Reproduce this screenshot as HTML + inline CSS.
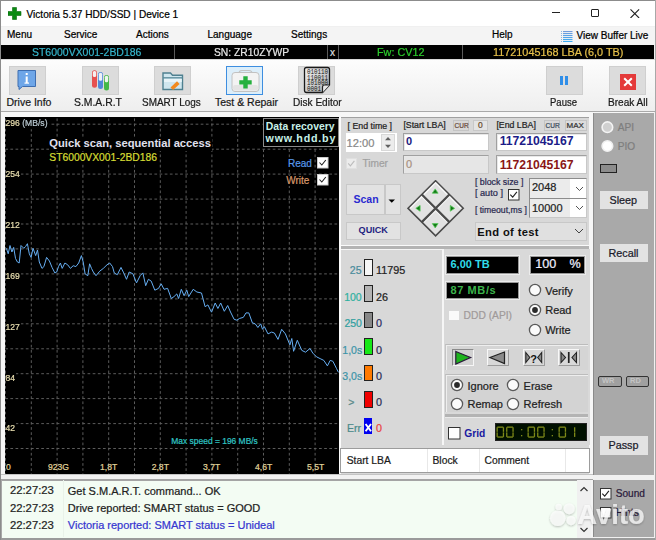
<!DOCTYPE html>
<html><head><meta charset="utf-8"><style>
html,body{margin:0;padding:0;}
body{width:656px;height:540px;overflow:hidden;position:relative;background:#f0f0f0;font-family:"Liberation Sans",sans-serif;}
body>div{position:absolute;}
.t{position:absolute;white-space:nowrap;line-height:1;font-family:"Liberation Sans",sans-serif;}
</style></head><body>
<div style="left:0px;top:0px;width:656px;height:540px;background:#f0f0f0"></div>
<div style="left:0px;top:0px;width:656px;height:26px;background:#ffffff"></div>
<div style="left:0px;top:0px;width:656px;height:1px;background:#8c8c8c"></div>
<svg style="position:absolute;left:8px;top:7px;" width="14" height="13" viewBox="0 0 14 13"><path d="M4.5 0.5h4v4h4.5v4h-4.5v4h-4v-4h-4.5v-4h4.5z" fill="#0b8a12" stroke="#0a6a0e" stroke-width="0.6"/></svg>
<span class="t" style="left:26.50px;top:10.01px;font-size:10.1px;color:#000;-webkit-text-stroke:0.22px currentColor;">Victoria 5.37 HDD/SSD | Device 1</span>
<div style="left:551.5px;top:12px;width:8.5px;height:1.3px;background:#222"></div>
<div style="left:590.7px;top:8.8px;width:8.6px;height:8.6px;border:1.2px solid #222;border-radius:1px;box-sizing:border-box"></div>
<svg style="position:absolute;left:630px;top:8.5px;" width="10" height="9.5" viewBox="0 0 10 9.5"><path d="M0.5 0.4L9.1 9M9.1 0.4L0.5 9" stroke="#222" stroke-width="1.1"/></svg>
<div style="left:0px;top:26.5px;width:656px;height:18.5px;background:#f4f4f4"></div>
<span class="t" style="left:7.00px;top:29.62px;font-size:10px;color:#000;-webkit-text-stroke:0.22px currentColor;">Menu</span>
<span class="t" style="left:64.00px;top:29.62px;font-size:10px;color:#000;-webkit-text-stroke:0.22px currentColor;">Service</span>
<span class="t" style="left:136.00px;top:29.62px;font-size:10px;color:#000;-webkit-text-stroke:0.22px currentColor;">Actions</span>
<span class="t" style="left:207.50px;top:29.93px;font-size:10px;color:#000;-webkit-text-stroke:0.22px currentColor;">Language</span>
<span class="t" style="left:291.00px;top:29.93px;font-size:10px;color:#000;-webkit-text-stroke:0.22px currentColor;">Settings</span>
<span class="t" style="left:492.00px;top:30.02px;font-size:10px;color:#000;-webkit-text-stroke:0.22px currentColor;">Help</span>
<svg style="position:absolute;left:561px;top:30px;" width="12" height="12" viewBox="0 0 12 12"><defs><linearGradient id="vb" gradientUnits="userSpaceOnUse" x1="0" y1="0" x2="0" y2="12"><stop offset="0" stop-color="#7a9ad8"/><stop offset="1" stop-color="#3aacf2"/></linearGradient></defs><rect x="2" y="1" width="9.5" height="1.1" fill="url(#vb)"/><rect x="0" y="1" width="1" height="1" fill="#8ab4e0"/><rect x="2" y="3" width="9.5" height="1.1" fill="url(#vb)"/><rect x="0" y="3" width="1" height="1" fill="#8ab4e0"/><rect x="2" y="5" width="9.5" height="1.1" fill="url(#vb)"/><rect x="0" y="5" width="1" height="1" fill="#8ab4e0"/><rect x="2" y="7" width="9.5" height="1.1" fill="url(#vb)"/><rect x="0" y="7" width="1" height="1" fill="#8ab4e0"/><rect x="2" y="9" width="9.5" height="1.1" fill="url(#vb)"/><rect x="0" y="9" width="1" height="1" fill="#8ab4e0"/><rect x="2" y="11" width="9.5" height="1.1" fill="url(#vb)"/><rect x="0" y="11" width="1" height="1" fill="#8ab4e0"/></svg>
<span class="t" style="left:576.50px;top:30.72px;font-size:10px;color:#000;-webkit-text-stroke:0.22px currentColor;">View Buffer Live</span>
<div style="left:1px;top:45px;width:653px;height:14px;background:#000"></div>
<div style="left:174px;top:45px;width:1px;height:14px;background:#5a5a5a"></div>
<div style="left:327px;top:45px;width:1px;height:14px;background:#5a5a5a"></div>
<div style="left:338px;top:45px;width:1px;height:14px;background:#5a5a5a"></div>
<div style="left:462px;top:45px;width:1px;height:14px;background:#5a5a5a"></div>
<span class="t" style="left:31.80px;top:47.15px;font-size:11.5px;color:#36b6cc;-webkit-text-stroke:0.22px currentColor;transform-origin:0 0;transform:scaleX(0.91);">ST6000VX001-2BD186</span>
<span class="t" style="left:213.60px;top:47.15px;font-size:11.5px;color:#e8e8e8;-webkit-text-stroke:0.22px currentColor;transform-origin:0 0;transform:scaleX(0.896);">SN: ZR10ZYWP</span>
<span class="t" style="left:330.00px;top:48.33px;font-size:10px;color:#dddddd;-webkit-text-stroke:0.22px currentColor;">x</span>
<span class="t" style="left:376.50px;top:47.15px;font-size:11.5px;color:#2ccc2c;-webkit-text-stroke:0.22px currentColor;transform-origin:0 0;transform:scaleX(0.94);">Fw: CV12</span>
<span class="t" style="left:493.20px;top:47.15px;font-size:11.5px;color:#e6c04a;-webkit-text-stroke:0.22px currentColor;transform-origin:0 0;transform:scaleX(0.943);">11721045168 LBA (6,0 TB)</span>
<div style="left:1px;top:59px;width:654px;height:53px;background:linear-gradient(#fdfdfd,#eeeeee)"></div>
<div style="left:1px;top:59px;width:654px;height:1px;background:#d8d8d8"></div>
<div style="left:1px;top:111px;width:654px;height:1px;background:#a9a9a9"></div>
<div style="left:1px;top:112px;width:654px;height:5px;background:#f7f7f7"></div>
<div style="left:9px;top:66px;width:37px;height:29px;background:#dcdcdc;border:1px solid #cfcfcf;box-sizing:border-box"></div>
<div style="left:82px;top:66px;width:37px;height:29px;background:#dcdcdc;border:1px solid #cfcfcf;box-sizing:border-box"></div>
<div style="left:154px;top:66px;width:37px;height:29px;background:#dcdcdc;border:1px solid #cfcfcf;box-sizing:border-box"></div>
<div style="left:226px;top:66px;width:37px;height:29px;background:#dceefa;border:1px solid #3d8ee0;box-sizing:border-box"></div>
<div style="left:298px;top:66px;width:37px;height:29px;background:#dcdcdc;border:1px solid #cfcfcf;box-sizing:border-box"></div>
<div style="left:546px;top:66px;width:37px;height:29px;background:#dcdcdc;border:1px solid #cfcfcf;box-sizing:border-box"></div>
<div style="left:609px;top:66px;width:37px;height:29px;background:#dcdcdc;border:1px solid #cfcfcf;box-sizing:border-box"></div>
<svg style="position:absolute;left:17px;top:70px;" width="20" height="20" viewBox="0 0 20 20"><path d="M1 0.5h17.5v16h-13l-3.5 3v-3h-1z" fill="#6ea6e8" stroke="#3f6eb0" stroke-width="1"/><rect x="8.7" y="3" width="2" height="2" fill="#fff"/><rect x="8.7" y="6.5" width="2" height="6.5" fill="#fff"/><rect x="7.5" y="12.5" width="4.5" height="1.2" fill="#fff"/></svg>
<svg style="position:absolute;left:91px;top:69px;" width="20" height="23" viewBox="0 0 20 23"><rect x="1" y="1.3" width="5" height="17.5" rx="2.5" fill="#e65050"/><rect x="7" y="3" width="5" height="17" rx="2.5" fill="#5088d8"/><rect x="13" y="6" width="5" height="15.5" rx="2.5" fill="#44b848"/><rect x="1.8" y="2" width="3.4" height="6" rx="1.5" fill="#f6f0f0"/><rect x="7.8" y="3.7" width="3.4" height="8" rx="1.5" fill="#eef2f8"/><rect x="13.8" y="6.7" width="3.4" height="6.5" rx="1.5" fill="#eef6ee"/></svg>
<svg style="position:absolute;left:160px;top:70px;" width="25" height="21" viewBox="0 0 25 21"><path d="M3 3h7.5l2 2.2h10v14.3h-19.5z" fill="#cfe6ee" stroke="#4f8090" stroke-width="1.4"/><path d="M3 7.8h19.5" stroke="#5a8c9a" stroke-width="1.3"/><rect x="4" y="9" width="17.8" height="3" fill="#e8f4f8"/><path d="M10.5 17.5l6.5-6.2l2.6 2.6l-6.5 6.2z" fill="#f28a1e"/></svg>
<svg style="position:absolute;left:230px;top:68px;" width="31" height="25" viewBox="0 0 31 25"><path d="M9 5.5q0-3 3-3h7q3 0 3 3" fill="none" stroke="#c4c4c4" stroke-width="1.2"/><rect x="2" y="4.5" width="27" height="19" rx="3" fill="#f3f3f3" stroke="#c2c2c2" stroke-width="1"/><rect x="3" y="17" width="25" height="5.5" rx="2" fill="#e4e4e4"/><path d="M13.3 8.2h4.4v4h4v4.4h-4v4h-4.4v-4h-4v-4.4h4z" fill="#26b03e"/></svg>
<svg style="position:absolute;left:303px;top:66px;" width="30" height="28" viewBox="0 0 30 28"><defs><linearGradient id="dg" x1="0" y1="0" x2="1" y2="1"><stop offset="0" stop-color="#f4f4f4"/><stop offset="1" stop-color="#a8a8a8"/></linearGradient></defs><path d="M3.5 1.5h21q2 0 2 2v15.5l-7 7.5h-16q-2 0-2-2v-21q0-2 2-2z" fill="url(#dg)" stroke="#1a1a1a" stroke-width="1.3"/><path d="M19.5 26.5v-5.5q0-2 2-2h5" fill="#e8e8e8" stroke="#222" stroke-width="1.2"/><g font-family="Liberation Mono" font-size="6.9" fill="#111"><text x="4" y="8" textLength="21" lengthAdjust="spacingAndGlyphs">010110</text><text x="4" y="13.5" textLength="21" lengthAdjust="spacingAndGlyphs">110011</text><text x="4" y="19" textLength="21" lengthAdjust="spacingAndGlyphs">101000</text><text x="4" y="24.5" textLength="14" lengthAdjust="spacingAndGlyphs">0001</text></g></svg>
<div style="left:560px;top:76px;width:3px;height:9px;background:#2f8ee8"></div>
<div style="left:565px;top:76px;width:3px;height:9px;background:#2f8ee8"></div>
<svg style="position:absolute;left:620px;top:73.5px;" width="16" height="16" viewBox="0 0 16 16"><rect x="0" y="0" width="16" height="16" fill="#e43a3a"/><path d="M4.2 4.2L11.8 11.8M11.8 4.2L4.2 11.8" stroke="#fff" stroke-width="2"/></svg>
<span class="t" style="left:6.50px;top:97.27px;font-size:10.5px;color:#1a1a1a;-webkit-text-stroke:0.22px currentColor;transform-origin:0 0;transform:scaleX(1);">Drive Info</span>
<span class="t" style="left:74.30px;top:97.27px;font-size:10.5px;color:#1a1a1a;-webkit-text-stroke:0.22px currentColor;transform-origin:0 0;transform:scaleX(0.99);">S.M.A.R.T</span>
<span class="t" style="left:141.50px;top:97.27px;font-size:10.5px;color:#1a1a1a;-webkit-text-stroke:0.22px currentColor;transform-origin:0 0;transform:scaleX(0.947);">SMART Logs</span>
<span class="t" style="left:215.00px;top:97.27px;font-size:10.5px;color:#1a1a1a;-webkit-text-stroke:0.22px currentColor;transform-origin:0 0;transform:scaleX(1);">Test &amp; Repair</span>
<span class="t" style="left:293.00px;top:97.27px;font-size:10.5px;color:#1a1a1a;-webkit-text-stroke:0.22px currentColor;transform-origin:0 0;transform:scaleX(0.96);">Disk Editor</span>
<span class="t" style="left:549.50px;top:97.27px;font-size:10.5px;color:#1a1a1a;-webkit-text-stroke:0.22px currentColor;transform-origin:0 0;transform:scaleX(0.906);">Pause</span>
<span class="t" style="left:608.10px;top:97.27px;font-size:10.5px;color:#1a1a1a;-webkit-text-stroke:0.22px currentColor;transform-origin:0 0;transform:scaleX(0.96);">Break All</span>
<div style="left:1px;top:112px;width:339px;height:368px;background:#f7f7f7"></div>
<div style="left:5px;top:117px;width:334px;height:357px;background:#000"></div>
<svg style="position:absolute;left:5px;top:117px;" width="334" height="357" viewBox="0 0 334 357"><line x1="0.5" y1="0" x2="0.5" y2="357" stroke="#5c5c5c" stroke-width="1" stroke-dasharray="2.7 2.444" stroke-dashoffset="3.67"/><line x1="26.3" y1="0" x2="26.3" y2="357" stroke="#5c5c5c" stroke-width="1" stroke-dasharray="2.7 2.444" stroke-dashoffset="3.67"/><line x1="52.1" y1="0" x2="52.1" y2="357" stroke="#5c5c5c" stroke-width="1" stroke-dasharray="2.7 2.444" stroke-dashoffset="3.67"/><line x1="77.9" y1="0" x2="77.9" y2="357" stroke="#5c5c5c" stroke-width="1" stroke-dasharray="2.7 2.444" stroke-dashoffset="3.67"/><line x1="103.7" y1="0" x2="103.7" y2="357" stroke="#5c5c5c" stroke-width="1" stroke-dasharray="2.7 2.444" stroke-dashoffset="3.67"/><line x1="129.5" y1="0" x2="129.5" y2="357" stroke="#5c5c5c" stroke-width="1" stroke-dasharray="2.7 2.444" stroke-dashoffset="3.67"/><line x1="155.3" y1="0" x2="155.3" y2="357" stroke="#5c5c5c" stroke-width="1" stroke-dasharray="2.7 2.444" stroke-dashoffset="3.67"/><line x1="181.1" y1="0" x2="181.1" y2="357" stroke="#5c5c5c" stroke-width="1" stroke-dasharray="2.7 2.444" stroke-dashoffset="3.67"/><line x1="206.9" y1="0" x2="206.9" y2="357" stroke="#5c5c5c" stroke-width="1" stroke-dasharray="2.7 2.444" stroke-dashoffset="3.67"/><line x1="232.7" y1="0" x2="232.7" y2="357" stroke="#5c5c5c" stroke-width="1" stroke-dasharray="2.7 2.444" stroke-dashoffset="3.67"/><line x1="258.5" y1="0" x2="258.5" y2="357" stroke="#5c5c5c" stroke-width="1" stroke-dasharray="2.7 2.444" stroke-dashoffset="3.67"/><line x1="284.3" y1="0" x2="284.3" y2="357" stroke="#5c5c5c" stroke-width="1" stroke-dasharray="2.7 2.444" stroke-dashoffset="3.67"/><line x1="310.1" y1="0" x2="310.1" y2="357" stroke="#5c5c5c" stroke-width="1" stroke-dasharray="2.7 2.444" stroke-dashoffset="3.67"/><line x1="0" y1="7.2" x2="334" y2="7.2" stroke="#5c5c5c" stroke-width="1" stroke-dasharray="2.7 2.444" stroke-dashoffset="4.9"/><line x1="0" y1="32.2" x2="334" y2="32.2" stroke="#5c5c5c" stroke-width="1" stroke-dasharray="2.7 2.444" stroke-dashoffset="4.9"/><line x1="0" y1="57.1" x2="334" y2="57.1" stroke="#5c5c5c" stroke-width="1" stroke-dasharray="2.7 2.444" stroke-dashoffset="4.9"/><line x1="0" y1="82.1" x2="334" y2="82.1" stroke="#5c5c5c" stroke-width="1" stroke-dasharray="2.7 2.444" stroke-dashoffset="4.9"/><line x1="0" y1="107.0" x2="334" y2="107.0" stroke="#5c5c5c" stroke-width="1" stroke-dasharray="2.7 2.444" stroke-dashoffset="4.9"/><line x1="0" y1="131.9" x2="334" y2="131.9" stroke="#5c5c5c" stroke-width="1" stroke-dasharray="2.7 2.444" stroke-dashoffset="4.9"/><line x1="0" y1="156.9" x2="334" y2="156.9" stroke="#5c5c5c" stroke-width="1" stroke-dasharray="2.7 2.444" stroke-dashoffset="4.9"/><line x1="0" y1="181.9" x2="334" y2="181.9" stroke="#5c5c5c" stroke-width="1" stroke-dasharray="2.7 2.444" stroke-dashoffset="4.9"/><line x1="0" y1="206.8" x2="334" y2="206.8" stroke="#5c5c5c" stroke-width="1" stroke-dasharray="2.7 2.444" stroke-dashoffset="4.9"/><line x1="0" y1="231.8" x2="334" y2="231.8" stroke="#5c5c5c" stroke-width="1" stroke-dasharray="2.7 2.444" stroke-dashoffset="4.9"/><line x1="0" y1="256.7" x2="334" y2="256.7" stroke="#5c5c5c" stroke-width="1" stroke-dasharray="2.7 2.444" stroke-dashoffset="4.9"/><line x1="0" y1="281.6" x2="334" y2="281.6" stroke="#5c5c5c" stroke-width="1" stroke-dasharray="2.7 2.444" stroke-dashoffset="4.9"/><line x1="0" y1="306.6" x2="334" y2="306.6" stroke="#5c5c5c" stroke-width="1" stroke-dasharray="2.7 2.444" stroke-dashoffset="4.9"/><line x1="0" y1="331.5" x2="334" y2="331.5" stroke="#5c5c5c" stroke-width="1" stroke-dasharray="2.7 2.444" stroke-dashoffset="4.9"/><polyline points="1.4,131.3 3.2,136.8 5.0,128.5 6.9,135.0 8.7,130.4 10.5,141.4 12.4,145.0 14.2,146.0 16.0,128.5 18.8,131.3 20.6,129.5 22.4,126.7 24.3,136.8 26.1,140.4 28.0,131.3 30.7,138.6 32.5,133.0 34.3,145.0 37.0,151.4 38.9,149.6 41.6,140.4 44.4,144.0 47.1,150.5 49.9,156.0 51.7,155.0 53.5,149.6 55.4,146.0 57.2,151.4 59.9,146.0 62.7,147.8 65.4,151.4 68.2,148.7 70.9,149.6 73.7,146.0 76.4,138.6 78.2,145.0 80.1,156.9 82.8,158.7 84.6,146.8 86.5,151.4 88.3,155.0 91.0,158.7 94.7,154.2 98.3,151.4 102.0,147.8 104.7,146.0 107.5,149.6 109.3,156.0 112.3,157.7 116.0,150.4 118.7,155.9 121.5,162.3 124.2,155.0 127.9,156.8 131.5,165.9 135.2,158.6 137.9,155.9 140.7,168.7 143.4,162.3 146.2,164.1 149.8,173.2 153.5,171.4 156.2,166.8 159.0,172.3 162.6,171.4 166.3,181.5 169.0,179.6 171.8,176.9 173.6,181.5 176.3,172.3 179.1,178.7 181.8,173.2 183.7,179.6 188.2,172.3 191.9,175.0 196.5,176.0 200.1,189.7 202.9,187.9 206.5,195.2 210.2,186.0 212.9,191.5 215.7,186.0 219.3,194.3 222.7,188.5 225.5,195.0 229.1,202.3 231.9,203.2 234.6,201.4 238.3,200.4 241.0,195.9 243.8,195.9 247.4,205.9 250.2,206.8 252.9,210.5 255.7,206.8 257.5,212.3 259.3,209.6 263.0,216.9 266.6,215.1 269.4,216.0 273.0,222.4 276.7,212.3 280.4,216.9 284.9,227.9 286.8,221.5 288.6,234.3 292.3,223.3 296.8,233.4 300.5,235.2 305.0,231.5 307.8,236.1 311.5,239.8 315.1,241.6 318.8,243.4 322.4,248.9 325.2,243.4 327.9,244.3 331.6,251.7 333.4,255.3" fill="none" stroke="#66aef2" stroke-width="1" stroke-linejoin="round"/></svg>
<span class="t" style="left:5.50px;top:117.99px;font-size:8.6px;color:#e6dcae;-webkit-text-stroke:0.22px currentColor;background:#000;padding:0 1px 1px 0;transform:scaleY(1.12);transform-origin:0 0;">296 <span style="color:#b8c8d0">(MB/s)</span></span>
<span class="t" style="left:5.50px;top:168.99px;font-size:8.6px;color:#e6dcae;-webkit-text-stroke:0.22px currentColor;background:#000;padding:0 1px 1px 0;transform:scaleY(1.12);transform-origin:0 0;">254</span>
<span class="t" style="left:5.50px;top:219.99px;font-size:8.6px;color:#e6dcae;-webkit-text-stroke:0.22px currentColor;background:#000;padding:0 1px 1px 0;transform:scaleY(1.12);transform-origin:0 0;">212</span>
<span class="t" style="left:5.50px;top:270.79px;font-size:8.6px;color:#e6dcae;-webkit-text-stroke:0.22px currentColor;background:#000;padding:0 1px 1px 0;transform:scaleY(1.12);transform-origin:0 0;">169</span>
<span class="t" style="left:5.50px;top:321.59px;font-size:8.6px;color:#e6dcae;-webkit-text-stroke:0.22px currentColor;background:#000;padding:0 1px 1px 0;transform:scaleY(1.12);transform-origin:0 0;">127</span>
<span class="t" style="left:5.50px;top:372.59px;font-size:8.6px;color:#e6dcae;-webkit-text-stroke:0.22px currentColor;background:#000;padding:0 1px 1px 0;transform:scaleY(1.12);transform-origin:0 0;">84</span>
<span class="t" style="left:5.50px;top:423.39px;font-size:8.6px;color:#e6dcae;-webkit-text-stroke:0.22px currentColor;background:#000;padding:0 1px 1px 0;transform:scaleY(1.12);transform-origin:0 0;">42</span>
<span class="t" style="left:6.00px;top:463.29px;font-size:8.6px;color:#e0d49a;-webkit-text-stroke:0.22px currentColor;">0</span>
<span class="t" style="left:48.00px;top:463.29px;font-size:8.6px;color:#e0d49a;-webkit-text-stroke:0.22px currentColor;">923G</span>
<span class="t" style="left:100.00px;top:463.29px;font-size:8.6px;color:#e0d49a;-webkit-text-stroke:0.22px currentColor;">1,8T</span>
<span class="t" style="left:151.70px;top:463.29px;font-size:8.6px;color:#e0d49a;-webkit-text-stroke:0.22px currentColor;">2,8T</span>
<span class="t" style="left:203.00px;top:463.29px;font-size:8.6px;color:#e0d49a;-webkit-text-stroke:0.22px currentColor;">3,7T</span>
<span class="t" style="left:255.00px;top:463.29px;font-size:8.6px;color:#e0d49a;-webkit-text-stroke:0.22px currentColor;">4,6T</span>
<span class="t" style="left:307.00px;top:463.29px;font-size:8.6px;color:#e0d49a;-webkit-text-stroke:0.22px currentColor;">5,5T</span>
<span class="t" style="left:49.30px;top:137.98px;font-size:11.2px;color:#e0e0ee;font-weight:bold;background:#000;padding:0 1px 2px 0;">Quick scan, sequential access</span>
<span class="t" style="left:49.30px;top:152.79px;font-size:10.3px;color:#d6dc34;-webkit-text-stroke:0.22px currentColor;background:#000;padding:0 1px 1px 0;">ST6000VX001-2BD186</span>
<span class="t" style="left:171.30px;top:437.41px;font-size:8.45px;color:#30c4c4;-webkit-text-stroke:0.22px currentColor;background:#000;">Max speed = 196 MB/s</span>
<div style="left:263px;top:118px;width:76px;height:28.5px;background:#000;border:1px solid #8c8c8c;box-sizing:border-box"></div>
<span class="t" style="left:265.80px;top:122.18px;font-size:10.4px;color:#c8f0e8;font-weight:bold;">Data recovery</span>
<span class="t" style="left:265.60px;top:133.34px;font-size:10.7px;color:#c8f0e8;font-weight:bold;letter-spacing:0.8px;">www.hdd.by</span>
<span class="t" style="left:288.00px;top:159.22px;font-size:10px;color:#5898e8;-webkit-text-stroke:0.22px currentColor;background:#000;">Read</span>
<span class="t" style="left:286.20px;top:176.12px;font-size:10px;color:#d8986a;-webkit-text-stroke:0.22px currentColor;background:#000;">Write</span>
<svg style="position:absolute;left:317px;top:157px;" width="12" height="12" viewBox="0 0 12 12"><rect x="0.5" y="0.5" width="10.5" height="10.5" fill="#fff" stroke="#ccc"/><path d="M2.5 5.5l2.3 2.5l4-5" fill="none" stroke="#222" stroke-width="1.1"/></svg>
<svg style="position:absolute;left:317px;top:174px;" width="12" height="12" viewBox="0 0 12 12"><rect x="0.5" y="0.5" width="10.5" height="10.5" fill="#fff" stroke="#ccc"/><path d="M2.5 5.5l2.3 2.5l4-5" fill="none" stroke="#222" stroke-width="1.1"/></svg>
<div style="left:339px;top:117px;width:2px;height:363px;background:#fbfbfb"></div>
<div style="left:341px;top:117px;width:248px;height:363px;background:#d8d8d8"></div>
<div style="left:341px;top:117px;width:251px;height:1px;background:#a0a0a0"></div>
<div style="left:589px;top:112px;width:3.5px;height:368px;background:#f6f6f6"></div>
<span class="t" style="left:347.50px;top:121.77px;font-size:8.8px;color:#222;-webkit-text-stroke:0.22px currentColor;">[ End time ]</span>
<div style="left:345.5px;top:133px;width:51px;height:19px;background:#fff"></div>
<div style="left:381px;top:134px;width:14px;height:17px;background:#ececec;border:1px solid #d8d8d8;box-sizing:border-box"></div>
<svg style="position:absolute;left:384px;top:136px;" width="8" height="13" viewBox="0 0 8 13"><path d="M1 4.2l3-3.2l3 3.2z" fill="#606060"/><path d="M1 8.8l3 3.2l3-3.2z" fill="#606060"/></svg>
<span class="t" style="left:346.50px;top:137.59px;font-size:11.16px;color:#888;-webkit-text-stroke:0.22px currentColor;">12:00</span>
<svg style="position:absolute;left:346px;top:158px;" width="11" height="11" viewBox="0 0 11 11"><rect x="0.5" y="0.5" width="10" height="10" fill="#ececec" stroke="#e0e0e0"/><path d="M2.2 5.4l2.2 2.4l4-5" fill="none" stroke="#bcbcbc" stroke-width="1.1"/></svg>
<span class="t" style="left:362.40px;top:159.21px;font-size:10.16px;color:#a0a0a0;-webkit-text-stroke:0.22px currentColor;">Timer</span>
<span class="t" style="left:403.40px;top:121.37px;font-size:8.75px;color:#222;-webkit-text-stroke:0.22px currentColor;">[Start LBA]</span>
<div style="left:452.5px;top:120px;width:16px;height:11px;background:#d8d8d8;border:1px solid #c4c4c4;box-sizing:border-box"></div>
<span class="t" style="left:454.50px;top:122.54px;font-size:6.5px;color:#6a4a3a;-webkit-text-stroke:0.22px currentColor;">CUR</span>
<div style="left:472.5px;top:120px;width:15px;height:11px;background:#e4e4e4;border:1px solid #c8c8c8;box-sizing:border-box"></div>
<span class="t" style="left:478.00px;top:121.30px;font-size:8.5px;color:#6a4a2a;-webkit-text-stroke:0.22px currentColor;">0</span>
<div style="left:403px;top:132.5px;width:86px;height:18.5px;background:#fff;border:1px solid #a0a0a0;border-right-color:#c8c8c8;border-bottom-color:#c8c8c8;box-sizing:border-box;box-shadow:inset 1px 1px 0 #e8e8e8"></div>
<div style="left:403px;top:155px;width:86px;height:18.5px;background:#e6e6e6;border:1px solid #a0a0a0;border-right-color:#c8c8c8;border-bottom-color:#c8c8c8;box-sizing:border-box;box-shadow:inset 1px 1px 0 #e8e8e8"></div>
<span class="t" style="left:406.00px;top:136.41px;font-size:11px;color:#201a80;font-weight:bold;">0</span>
<span class="t" style="left:406.00px;top:159.21px;font-size:11px;color:#a89080;-webkit-text-stroke:0.22px currentColor;">0</span>
<span class="t" style="left:496.40px;top:121.37px;font-size:8.78px;color:#222;-webkit-text-stroke:0.22px currentColor;">[End LBA]</span>
<div style="left:543.5px;top:120px;width:16px;height:11px;background:#d8d8d8;border:1px solid #c4c4c4;box-sizing:border-box"></div>
<span class="t" style="left:545.50px;top:122.54px;font-size:6.5px;color:#3a4a5a;-webkit-text-stroke:0.22px currentColor;">CUR</span>
<div style="left:565px;top:120px;width:22px;height:11px;background:#dcdcdc;border:1px solid #c4c4c4;box-sizing:border-box"></div>
<span class="t" style="left:566.50px;top:121.66px;font-size:8px;color:#333;-webkit-text-stroke:0.22px currentColor;">MAX</span>
<div style="left:496px;top:132.5px;width:91px;height:18.5px;background:#fff;border:1px solid #a0a0a0;border-right-color:#c8c8c8;border-bottom-color:#c8c8c8;box-sizing:border-box;box-shadow:inset 1px 1px 0 #e8e8e8"></div>
<div style="left:496px;top:155px;width:91px;height:18.5px;background:#fff;border:1px solid #a0a0a0;border-right-color:#c8c8c8;border-bottom-color:#c8c8c8;box-sizing:border-box;box-shadow:inset 1px 1px 0 #e8e8e8"></div>
<span class="t" style="left:499.70px;top:135.37px;font-size:12.2px;color:#1c1c88;font-weight:bold;">11721045167</span>
<span class="t" style="left:499.70px;top:158.87px;font-size:12.2px;color:#8a1616;font-weight:bold;">11721045167</span>
<div style="left:345.5px;top:184px;width:39px;height:30.5px;background:#e2e2e2;border:1px solid #c8c8c8;box-sizing:border-box"></div>
<div style="left:385px;top:184px;width:15.5px;height:30.5px;background:#e2e2e2;border:1px solid #c8c8c8;box-sizing:border-box"></div>
<svg style="position:absolute;left:388px;top:199px;" width="8" height="4" viewBox="0 0 8 4"><path d="M0.5 0.5h6.5l-3.25 3.2z" fill="#000"/></svg>
<span class="t" style="left:353.50px;top:193.77px;font-size:10.5px;color:#2a2ad0;font-weight:bold;">Scan</span>
<div style="left:346px;top:221.5px;width:54.5px;height:18.5px;background:#e2e2e2;border:1px solid #c8c8c8;box-sizing:border-box"></div>
<span class="t" style="left:358.60px;top:225.83px;font-size:9.1px;color:#1e1e80;font-weight:bold;">QUICK</span>
<svg style="position:absolute;left:407px;top:180px;" width="58" height="58" viewBox="0 0 58 58"><path d="M28.6 0.6999999999999993L56.2 28.3L28.6 55.900000000000006L1.0 28.3Z" fill="#e2e2e2" stroke="#4a4a4a" stroke-width="1.6"/><path d="M17.0 14.5L28.6 2.8999999999999986L40.2 14.5" fill="none" stroke="#f8f8f8" stroke-width="1.2"/><path d="M3.1999999999999993 28.3L14.8 16.7L26.400000000000002 28.3" fill="none" stroke="#f8f8f8" stroke-width="1.2"/><path d="M30.800000000000004 28.3L42.400000000000006 16.7L54.00000000000001 28.3" fill="none" stroke="#f8f8f8" stroke-width="1.2"/><path d="M17.0 42.1L28.6 30.5L40.2 42.1" fill="none" stroke="#f8f8f8" stroke-width="1.2"/><path d="M14.8 14.5L42.400000000000006 42.1M42.400000000000006 14.5L14.8 42.1" stroke="#4a4a4a" stroke-width="2.2"/><path d="M28.200000000000003 8.9L31.1 13.200000000000001L25.300000000000004 13.200000000000001Z" fill="#127a16" stroke="#58c85a" stroke-width="0.8"/><path d="M28.200000000000003 47.9L31.1 43.6L25.300000000000004 43.6Z" fill="#127a16" stroke="#58c85a" stroke-width="0.8"/><path d="M8.800000000000002 28.3L13.100000000000003 25.400000000000002L13.100000000000003 31.2Z" fill="#127a16" stroke="#58c85a" stroke-width="0.8"/><path d="M47.6 28.3L43.300000000000004 25.400000000000002L43.300000000000004 31.2Z" fill="#127a16" stroke="#58c85a" stroke-width="0.8"/></svg>
<span class="t" style="left:474.90px;top:178.16px;font-size:8.82px;color:#2a2a50;-webkit-text-stroke:0.22px currentColor;">[ block size ]</span>
<span class="t" style="left:474.90px;top:189.22px;font-size:9.2px;color:#2a2a50;-webkit-text-stroke:0.22px currentColor;">[ auto ]</span>
<svg style="position:absolute;left:508px;top:189px;" width="12" height="12" viewBox="0 0 12 12"><rect x="0.5" y="0.5" width="10.5" height="10.5" fill="#fff" stroke="#333"/><path d="M2.3 5.6l2.4 2.6l4.2-5.4" fill="none" stroke="#222" stroke-width="1.1"/></svg>
<span class="t" style="left:474.90px;top:205.88px;font-size:8.67px;color:#2a2a50;-webkit-text-stroke:0.22px currentColor;">[ timeout,ms ]</span>
<div style="left:529px;top:177.5px;width:57.5px;height:21px;background:#fff;border:1px solid;border-color:#8c8c8c #c8c8c8 #c8c8c8 #8c8c8c;box-sizing:border-box"></div>
<div style="left:530px;top:178.5px;width:39.5px;height:19px;background:#ebebeb"></div>
<svg style="position:absolute;left:575.0px;top:185.5px;" width="10" height="6" viewBox="0 0 10 6"><path d="M1 1l3.5 3.5l3.5-3.5" fill="none" stroke="#555" stroke-width="1"/></svg>
<span class="t" style="left:532.00px;top:181.91px;font-size:11px;color:#222;-webkit-text-stroke:0.22px currentColor;">2048</span>
<div style="left:529px;top:197.8px;width:57.5px;height:20px;background:#fff;border:1px solid;border-color:#8c8c8c #c8c8c8 #c8c8c8 #8c8c8c;box-sizing:border-box"></div>
<div style="left:530px;top:198.8px;width:39.5px;height:18px;background:#ebebeb"></div>
<svg style="position:absolute;left:575.0px;top:205.3px;" width="10" height="6" viewBox="0 0 10 6"><path d="M1 1l3.5 3.5l3.5-3.5" fill="none" stroke="#555" stroke-width="1"/></svg>
<span class="t" style="left:532.00px;top:202.71px;font-size:11px;color:#222;-webkit-text-stroke:0.22px currentColor;">10000</span>
<div style="left:475px;top:221.5px;width:111.5px;height:19.5px;background:#e0e0e0;border:1px solid #c8c8c8;box-sizing:border-box"></div>
<svg style="position:absolute;left:573.5px;top:227.5px;" width="10" height="6" viewBox="0 0 10 6"><path d="M1 1l4 4l4-4" fill="none" stroke="#444" stroke-width="1"/></svg>
<span class="t" style="left:477.30px;top:226.88px;font-size:11.2px;color:#111;font-weight:bold;letter-spacing:0.35px;">End of test</span>
<div style="left:341px;top:245px;width:247.7px;height:1px;background:#fafafa"></div>
<div style="left:341px;top:246px;width:247.7px;height:2.5px;background:#b4b4b4"></div>
<div style="left:341px;top:248.5px;width:247.7px;height:1.5px;background:#f6f6f6"></div>
<div style="left:363.5px;top:259.0px;width:9px;height:16.5px;background:#f6f6f6;border:1px solid #222;box-sizing:border-box"></div>
<span class="t" style="left:349.80px;top:265.47px;font-size:10.5px;color:#4a8c9c;-webkit-text-stroke:0.22px currentColor;">25</span>
<span class="t" style="left:376.00px;top:265.43px;font-size:10.8px;color:#222;-webkit-text-stroke:0.22px currentColor;">11795</span>
<div style="left:363.5px;top:285.4px;width:9px;height:16.5px;background:#b4b4b4;border:1px solid #222;box-sizing:border-box"></div>
<span class="t" style="left:344.20px;top:291.87px;font-size:10.5px;color:#2eb0a0;-webkit-text-stroke:0.22px currentColor;">100</span>
<span class="t" style="left:376.00px;top:291.83px;font-size:10.8px;color:#222;-webkit-text-stroke:0.22px currentColor;">26</span>
<div style="left:363.5px;top:311.8px;width:9px;height:16.5px;background:#888888;border:1px solid #222;box-sizing:border-box"></div>
<span class="t" style="left:344.40px;top:318.27px;font-size:10.5px;color:#30a0a0;-webkit-text-stroke:0.22px currentColor;">250</span>
<span class="t" style="left:376.00px;top:318.23px;font-size:10.8px;color:#2a2a60;-webkit-text-stroke:0.22px currentColor;">0</span>
<div style="left:363.5px;top:338.2px;width:9px;height:16.5px;background:#18e818;border:1px solid #222;box-sizing:border-box"></div>
<span class="t" style="left:342.30px;top:344.67px;font-size:10.5px;color:#3c94a8;-webkit-text-stroke:0.22px currentColor;">1,0s</span>
<span class="t" style="left:376.00px;top:344.63px;font-size:10.8px;color:#2a2a50;-webkit-text-stroke:0.22px currentColor;">0</span>
<div style="left:363.5px;top:364.6px;width:9px;height:16.5px;background:#ff7a00;border:1px solid #222;box-sizing:border-box"></div>
<span class="t" style="left:342.30px;top:371.07px;font-size:10.5px;color:#3c94a8;-webkit-text-stroke:0.22px currentColor;">3,0s</span>
<span class="t" style="left:376.00px;top:371.03px;font-size:10.8px;color:#2a2a50;-webkit-text-stroke:0.22px currentColor;">0</span>
<div style="left:363.5px;top:391.0px;width:9px;height:16.5px;background:#f00000;border:1px solid #222;box-sizing:border-box"></div>
<span class="t" style="left:348.30px;top:397.47px;font-size:10.5px;color:#5a8a8a;-webkit-text-stroke:0.22px currentColor;">&gt;</span>
<span class="t" style="left:376.00px;top:397.43px;font-size:10.8px;color:#2a2a50;-webkit-text-stroke:0.22px currentColor;">0</span>
<div style="left:363.5px;top:418px;width:8.5px;height:15.5px;background:#0000f0"></div>
<span class="t" style="left:347.10px;top:422.57px;font-size:10.5px;color:#4a8a8a;-webkit-text-stroke:0.22px currentColor;">Err</span>
<span class="t" style="left:376.00px;top:422.53px;font-size:10.8px;color:#e84040;-webkit-text-stroke:0.22px currentColor;">0</span>
<svg style="position:absolute;left:363.5px;top:418px;" width="9" height="16" viewBox="0 0 9 16"><path d="M1.6 6l5.4 7.2M7 6l-5.4 7.2" stroke="#fff" stroke-width="1.9"/></svg>
<div style="left:442px;top:249px;width:1.5px;height:196px;background:#f6f6f6"></div>
<div style="left:443.5px;top:249px;width:146px;height:196px;background:#d9d9d9"></div>
<div style="left:446px;top:256px;width:73px;height:17.5px;background:#000;border:1px solid #9a9a9a;box-sizing:border-box;box-shadow:0 0 0 1px #ececec"></div>
<div style="left:529.5px;top:256px;width:55.5px;height:17.5px;background:#000;border:1px solid #9a9a9a;box-sizing:border-box;box-shadow:0 0 0 1px #ececec"></div>
<div style="left:446px;top:281.5px;width:73px;height:17.5px;background:#000;border:1px solid #9a9a9a;box-sizing:border-box;box-shadow:0 0 0 1px #ececec"></div>
<span class="t" style="left:450.50px;top:258.61px;font-size:11px;color:#30dcea;font-weight:bold;">6,00 TB</span>
<span class="t" style="left:535.20px;top:258.22px;font-size:12.6px;color:#f0f0ff;-webkit-text-stroke:0.22px currentColor;">100</span>
<span class="t" style="left:569.50px;top:258.22px;font-size:12.6px;color:#f0f0ff;-webkit-text-stroke:0.22px currentColor;">%</span>
<span class="t" style="left:450.50px;top:284.91px;font-size:11px;color:#3cb44c;font-weight:bold;letter-spacing:0.6px;">87 MB/s</span>
<div style="left:449px;top:310.5px;width:9.5px;height:9.5px;background:#fafafa"></div>
<span class="t" style="left:463.60px;top:311.00px;font-size:10.25px;color:#a09a9a;-webkit-text-stroke:0.22px currentColor;">DDD (API)</span>
<svg style="position:absolute;left:528.4px;top:283.4px;" width="14" height="14" viewBox="0 0 14 14"><circle cx="7" cy="7" r="5.6" fill="#fbfbfb" stroke="#5a5a5a" stroke-width="1.3"/></svg>
<span class="t" style="left:545.20px;top:285.81px;font-size:11px;color:#222;-webkit-text-stroke:0.22px currentColor;">Verify</span>
<svg style="position:absolute;left:528.4px;top:303px;" width="14" height="14" viewBox="0 0 14 14"><circle cx="7" cy="7" r="5.6" fill="#fbfbfb" stroke="#5a5a5a" stroke-width="1.3"/><circle cx="7" cy="7" r="2.9" fill="#2a2a2a"/></svg>
<span class="t" style="left:545.20px;top:305.41px;font-size:11px;color:#222;-webkit-text-stroke:0.22px currentColor;">Read</span>
<svg style="position:absolute;left:528.4px;top:322.6px;" width="14" height="14" viewBox="0 0 14 14"><circle cx="7" cy="7" r="5.6" fill="#fbfbfb" stroke="#5a5a5a" stroke-width="1.3"/></svg>
<span class="t" style="left:545.20px;top:325.01px;font-size:11px;color:#222;-webkit-text-stroke:0.22px currentColor;">Write</span>
<div style="left:444.5px;top:343.5px;width:143px;height:26px;background:#d5d5d5;border-top:1px solid #bcbcbc;border-left:1px solid #c4c4c4;box-sizing:border-box;box-shadow:inset 1px 1px 0 #eeeeee"></div>
<div style="left:452.2px;top:349px;width:21.5px;height:17px;background:#d2d2d2;border:1px solid;border-color:#8a8a8a #f6f6f6 #f6f6f6 #8a8a8a;box-sizing:border-box"></div>
<svg style="position:absolute;left:452.2px;top:349px;" width="21.5" height="17" viewBox="0 0 21.5 17"><path d="M3.8 2.5L18.6 8.5L3.8 15z" fill="#1eb41e" stroke="#2a1a3a" stroke-width="1.2"/></svg>
<div style="left:487px;top:349px;width:21.5px;height:17px;background:#d8d8d8;border:1px solid;border-color:#f8f8f8 #9c9c9c #9c9c9c #f8f8f8;box-sizing:border-box"></div>
<svg style="position:absolute;left:487px;top:349px;" width="21.5" height="17" viewBox="0 0 21.5 17"><path d="M17.5 3L3 8.5L17.5 14.5z" fill="#8a8a8a" stroke="#222" stroke-width="1.2"/></svg>
<div style="left:523px;top:349px;width:21.5px;height:17px;background:#d8d8d8;border:1px solid;border-color:#f8f8f8 #9c9c9c #9c9c9c #f8f8f8;box-sizing:border-box"></div>
<svg style="position:absolute;left:523px;top:349px;" width="21.5" height="17" viewBox="0 0 21.5 17"><path d="M2.8 3.5L6.8 8.5L2.8 13.5z" fill="#8a8a8a" stroke="#222" stroke-width="1.1"/><path d="M18.7 3.5L14.7 8.5L18.7 13.5z" fill="#8a8a8a" stroke="#222" stroke-width="1.1"/><text x="7.2" y="13.5" font-family="Liberation Sans" font-weight="bold" font-size="11" fill="#111">?</text></svg>
<div style="left:558px;top:349px;width:21.5px;height:17px;background:#d8d8d8;border:1px solid;border-color:#f8f8f8 #9c9c9c #9c9c9c #f8f8f8;box-sizing:border-box"></div>
<svg style="position:absolute;left:558px;top:349px;" width="21.5" height="17" viewBox="0 0 21.5 17"><path d="M3 3.5L7.5 8.5L3 13.5z" fill="#8a8a8a" stroke="#222" stroke-width="1.1"/><path d="M18.5 3.5L14 8.5L18.5 13.5z" fill="#8a8a8a" stroke="#222" stroke-width="1.1"/><rect x="9.9" y="3" width="1.7" height="11" fill="#222"/></svg>
<div style="left:444.5px;top:373.5px;width:143px;height:38.5px;background:#d3d3d3;border-top:1px solid #bcbcbc;border-left:1px solid #c4c4c4;box-sizing:border-box;box-shadow:inset 1px 1px 0 #eeeeee"></div>
<svg style="position:absolute;left:449.5px;top:378.1px;" width="14" height="14" viewBox="0 0 14 14"><circle cx="7" cy="7" r="5.6" fill="#fbfbfb" stroke="#5a5a5a" stroke-width="1.3"/><circle cx="7" cy="7" r="2.9" fill="#2a2a2a"/></svg>
<span class="t" style="left:467.50px;top:380.51px;font-size:11px;color:#222;-webkit-text-stroke:0.22px currentColor;">Ignore</span>
<svg style="position:absolute;left:505.6px;top:378.1px;" width="14" height="14" viewBox="0 0 14 14"><circle cx="7" cy="7" r="5.6" fill="#fbfbfb" stroke="#5a5a5a" stroke-width="1.3"/></svg>
<span class="t" style="left:523.60px;top:380.51px;font-size:11px;color:#222;-webkit-text-stroke:0.22px currentColor;">Erase</span>
<svg style="position:absolute;left:449.5px;top:397px;" width="14" height="14" viewBox="0 0 14 14"><circle cx="7" cy="7" r="5.6" fill="#fbfbfb" stroke="#5a5a5a" stroke-width="1.3"/></svg>
<span class="t" style="left:467.50px;top:399.41px;font-size:11px;color:#222;-webkit-text-stroke:0.22px currentColor;">Remap</span>
<svg style="position:absolute;left:505.6px;top:397px;" width="14" height="14" viewBox="0 0 14 14"><circle cx="7" cy="7" r="5.6" fill="#fbfbfb" stroke="#5a5a5a" stroke-width="1.3"/></svg>
<span class="t" style="left:523.60px;top:399.41px;font-size:11px;color:#222;-webkit-text-stroke:0.22px currentColor;">Refresh</span>
<div style="left:444.5px;top:413.5px;width:143px;height:4px;background:#b4b4b4;border-bottom:1px solid #eaeaea;box-sizing:border-box"></div>
<svg style="position:absolute;left:448px;top:427px;" width="13" height="13" viewBox="0 0 13 13"><rect x="0.5" y="0.5" width="11.5" height="11.5" fill="#fff" stroke="#333"/></svg>
<span class="t" style="left:464.30px;top:428.70px;font-size:10.25px;color:#1a1aa0;font-weight:bold;">Grid</span>
<div style="left:494.5px;top:423px;width:92px;height:17.5px;background:#001000;border:1px solid #202020;box-sizing:border-box"></div>
<svg style="position:absolute;left:494.5px;top:423px;" width="92" height="17.5" viewBox="0 0 92 17.5"><rect x="2.28" y="3.50" width="6.04" height="1.30" fill="#7e8a18"/><rect x="7.80" y="4.28" width="1.30" height="4.56" fill="#7e8a18"/><rect x="7.80" y="9.36" width="1.30" height="4.56" fill="#7e8a18"/><rect x="2.28" y="13.40" width="6.04" height="1.30" fill="#7e8a18"/><rect x="1.50" y="9.36" width="1.30" height="4.56" fill="#7e8a18"/><rect x="1.50" y="4.28" width="1.30" height="4.56" fill="#7e8a18"/><rect x="11.88" y="3.50" width="6.04" height="1.30" fill="#7e8a18"/><rect x="17.40" y="4.28" width="1.30" height="4.56" fill="#7e8a18"/><rect x="17.40" y="9.36" width="1.30" height="4.56" fill="#7e8a18"/><rect x="11.88" y="13.40" width="6.04" height="1.30" fill="#7e8a18"/><rect x="11.10" y="9.36" width="1.30" height="4.56" fill="#7e8a18"/><rect x="11.10" y="4.28" width="1.30" height="4.56" fill="#7e8a18"/><rect x="33.28" y="3.50" width="6.04" height="1.30" fill="#7e8a18"/><rect x="38.80" y="4.28" width="1.30" height="4.56" fill="#7e8a18"/><rect x="38.80" y="9.36" width="1.30" height="4.56" fill="#7e8a18"/><rect x="33.28" y="13.40" width="6.04" height="1.30" fill="#7e8a18"/><rect x="32.50" y="9.36" width="1.30" height="4.56" fill="#7e8a18"/><rect x="32.50" y="4.28" width="1.30" height="4.56" fill="#7e8a18"/><rect x="42.88" y="3.50" width="6.04" height="1.30" fill="#7e8a18"/><rect x="48.40" y="4.28" width="1.30" height="4.56" fill="#7e8a18"/><rect x="48.40" y="9.36" width="1.30" height="4.56" fill="#7e8a18"/><rect x="42.88" y="13.40" width="6.04" height="1.30" fill="#7e8a18"/><rect x="42.10" y="9.36" width="1.30" height="4.56" fill="#7e8a18"/><rect x="42.10" y="4.28" width="1.30" height="4.56" fill="#7e8a18"/><rect x="64.28" y="3.50" width="6.04" height="1.30" fill="#7e8a18"/><rect x="69.80" y="4.28" width="1.30" height="4.56" fill="#7e8a18"/><rect x="69.80" y="9.36" width="1.30" height="4.56" fill="#7e8a18"/><rect x="64.28" y="13.40" width="6.04" height="1.30" fill="#7e8a18"/><rect x="63.50" y="9.36" width="1.30" height="4.56" fill="#7e8a18"/><rect x="63.50" y="4.28" width="1.30" height="4.56" fill="#7e8a18"/><rect x="79.00" y="4.28" width="1.30" height="4.56" fill="#7e8a18"/><rect x="79.00" y="9.36" width="1.30" height="4.56" fill="#7e8a18"/><rect x="26.00" y="6" width="1.3" height="1.3" fill="#7e8a18"/><rect x="26.00" y="12" width="1.3" height="1.3" fill="#7e8a18"/><rect x="56.70" y="6" width="1.3" height="1.3" fill="#7e8a18"/><rect x="56.70" y="12" width="1.3" height="1.3" fill="#7e8a18"/></svg>
<div style="left:340px;top:448px;width:250px;height:25px;background:#fff;border:1px solid #9c9c9c;box-sizing:border-box"></div>
<div style="left:426.5px;top:449px;width:1px;height:23px;background:#e8e8e8"></div>
<div style="left:479px;top:449px;width:1px;height:23px;background:#e8e8e8"></div>
<div style="left:564.5px;top:449px;width:1px;height:23px;background:#e8e8e8"></div>
<span class="t" style="left:346.70px;top:456.39px;font-size:10.3px;color:#1a1a1a;-webkit-text-stroke:0.22px currentColor;">Start LBA</span>
<span class="t" style="left:432.50px;top:456.39px;font-size:10.3px;color:#1a1a1a;-webkit-text-stroke:0.22px currentColor;">Block</span>
<span class="t" style="left:484.50px;top:456.39px;font-size:10.3px;color:#1a1a1a;-webkit-text-stroke:0.22px currentColor;">Comment</span>
<div style="left:593px;top:112.5px;width:61px;height:362.5px;background:#a9a9a9;border-left:1px solid #8a8a8a;box-sizing:border-box"></div>
<div style="left:654px;top:112px;width:2px;height:428px;background:#f0f0f0"></div>
<svg style="position:absolute;left:600px;top:119.5px;" width="15" height="15" viewBox="0 0 15 15"><circle cx="7.4" cy="7.2" r="5.3" fill="#d0d0d0" stroke="#f4f4f4" stroke-width="1.6"/></svg>
<span class="t" style="left:617.80px;top:123.31px;font-size:10.1px;color:#7e7e7e;-webkit-text-stroke:0.22px currentColor;">API</span>
<svg style="position:absolute;left:600px;top:138.5px;" width="15" height="15" viewBox="0 0 15 15"><circle cx="7.4" cy="7.0" r="5.3" fill="#fff" stroke="#f0f0f0" stroke-width="1.6"/></svg>
<span class="t" style="left:617.80px;top:142.11px;font-size:10.1px;color:#7e7e7e;-webkit-text-stroke:0.22px currentColor;">PIO</span>
<div style="left:600px;top:164px;width:16.5px;height:9px;background:#8c8c8c;border:1px solid #222;box-sizing:border-box"></div>
<div style="left:600px;top:191px;width:47.5px;height:17.5px;background:#e2e2e2"></div>
<span class="t" style="left:609.50px;top:195.34px;font-size:10.8px;color:#1a1a2a;-webkit-text-stroke:0.22px currentColor;">Sleep</span>
<div style="left:600px;top:244px;width:47.5px;height:17.5px;background:#e2e2e2"></div>
<span class="t" style="left:608.50px;top:247.54px;font-size:10.8px;color:#1a1a2a;-webkit-text-stroke:0.22px currentColor;">Recall</span>
<div style="left:600px;top:435.5px;width:48px;height:19px;background:#e2e2e2"></div>
<span class="t" style="left:608.50px;top:439.79px;font-size:10.8px;color:#1a1a2a;-webkit-text-stroke:0.22px currentColor;">Passp</span>
<div style="left:598px;top:375.5px;width:23.5px;height:11px;background:#a0a0a0;border:1.5px solid #333;border-radius:2px;box-sizing:border-box"></div>
<span class="t" style="left:602.00px;top:376.72px;font-size:7.5px;color:#c4c4c4;font-weight:bold;">WR</span>
<div style="left:626px;top:375.5px;width:22.5px;height:11px;background:#a0a0a0;border:1.5px solid #333;border-radius:2px;box-sizing:border-box"></div>
<span class="t" style="left:630.00px;top:376.72px;font-size:7.5px;color:#c4c4c4;font-weight:bold;">RD</span>
<div style="left:1px;top:473.5px;width:592px;height:6.5px;background:#f2f2f2"></div>
<div style="left:1px;top:474px;width:592px;height:1px;background:#c4c4c4"></div>
<div style="left:1px;top:479px;width:592px;height:1.5px;background:#a4a4a4"></div>
<div style="left:1px;top:480.5px;width:576px;height:57.3px;background:#f3fcf3"></div>
<div style="left:63px;top:480px;width:1px;height:57px;background:#e9f2e9"></div>
<div style="left:577px;top:480px;width:14px;height:57px;background:#f0f0f0"></div>
<svg style="position:absolute;left:579px;top:485px;" width="10" height="8" viewBox="0 0 10 8"><path d="M1.5 6l3.5-3.5l3.5 3.5" fill="none" stroke="#333" stroke-width="1.2"/></svg>
<svg style="position:absolute;left:579px;top:526px;" width="10" height="8" viewBox="0 0 10 8"><path d="M1.5 2l3.5 3.5l3.5-3.5" fill="none" stroke="#333" stroke-width="1.2"/></svg>
<span class="t" style="left:9.90px;top:485.47px;font-size:11.3px;color:#222;-webkit-text-stroke:0.22px currentColor;">22:27:23</span>
<span class="t" style="left:67.80px;top:485.51px;font-size:11px;color:#222;-webkit-text-stroke:0.22px currentColor;">Get S.M.A.R.T. command... OK</span>
<span class="t" style="left:9.90px;top:502.57px;font-size:11.3px;color:#222;-webkit-text-stroke:0.22px currentColor;">22:27:23</span>
<span class="t" style="left:67.80px;top:502.61px;font-size:11px;color:#222;-webkit-text-stroke:0.22px currentColor;">Drive reported: SMART status = GOOD</span>
<span class="t" style="left:9.90px;top:519.67px;font-size:11.3px;color:#222;-webkit-text-stroke:0.22px currentColor;">22:27:23</span>
<span class="t" style="left:67.80px;top:519.71px;font-size:11px;color:#3636d0;-webkit-text-stroke:0.22px currentColor;">Victoria reported: SMART status = Unideal</span>
<div style="left:591px;top:480px;width:2px;height:57px;background:#f4f4f4"></div>
<div style="left:593px;top:480px;width:61px;height:57px;background:#a9a9a9;border-left:1px solid #8a8a8a;box-sizing:border-box"></div>
<svg style="position:absolute;left:600px;top:487.5px;" width="12" height="12" viewBox="0 0 12 12"><rect x="0.5" y="0.5" width="10.5" height="10.5" fill="#fff" stroke="#333"/><path d="M2.3 5.6l2.4 2.6l4.2-5.4" fill="none" stroke="#222" stroke-width="1.1"/></svg>
<span class="t" style="left:615.70px;top:488.81px;font-size:10.1px;color:#2a1a3a;-webkit-text-stroke:0.22px currentColor;">Sound</span>
<svg style="position:absolute;left:600px;top:506.5px;" width="12" height="12" viewBox="0 0 12 12"><rect x="0.5" y="0.5" width="10.5" height="10.5" fill="#fff" stroke="#333"/></svg>
<span class="t" style="left:615.70px;top:508.11px;font-size:10.1px;color:#2a1a3a;-webkit-text-stroke:0.22px currentColor;">Hints</span>
<div style="left:0px;top:537.8px;width:656px;height:2.2px;background:#9a9a9a"></div>
<div style="left:1px;top:480px;width:1px;height:58px;background:#a8a8a8"></div>
<div style="left:0px;top:0px;width:1px;height:540px;background:#8c8c8c"></div>
<div style="left:655px;top:0px;width:1px;height:540px;background:#a8a8a8"></div>
<svg style="position:absolute;left:540px;top:490px;" width="116" height="45" viewBox="0 0 116 45"><defs><filter id="sh" x="-20%" y="-20%" width="140%" height="140%"><feGaussianBlur in="SourceAlpha" stdDeviation="0.9"/><feOffset dx="0.3" dy="0.5"/><feComponentTransfer><feFuncA type="linear" slope="0.35"/></feComponentTransfer><feMerge><feMergeNode/><feMergeNode in="SourceGraphic"/></feMerge></filter></defs><g filter="url(#sh)"><circle cx="17.8" cy="28.3" r="7.8" fill="rgba(255,255,255,0.72)"/><circle cx="29.2" cy="18.7" r="5.5" fill="rgba(255,255,255,0.72)"/><circle cx="18.7" cy="16.9" r="3.2" fill="rgba(255,255,255,0.72)"/><circle cx="31.1" cy="30.6" r="4.6" fill="rgba(255,255,255,0.72)"/><text x="37.2" y="33.8" font-family="Liberation Sans" font-weight="bold" font-size="27.5" fill="rgba(255,255,255,0.72)">Avito</text></g></svg>
</body></html>
